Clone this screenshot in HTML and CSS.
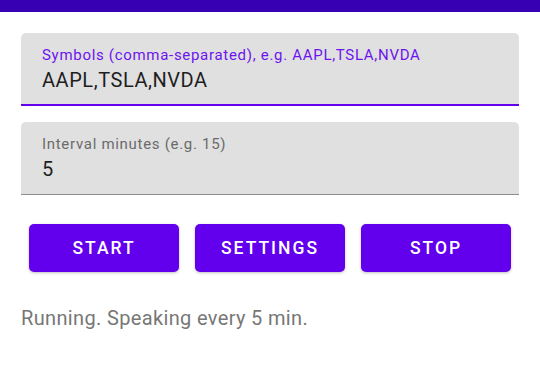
FILE: index.html
```html
<!DOCTYPE html>
<html>
<head>
<meta charset="utf-8">
<link rel="stylesheet" href="styles.css">
</head>
<body>
<div class="topbar"></div>
<main class="content">
  <div class="field field-focused">
    <div class="field-label">Symbols (comma-separated), e.g. AAPL,TSLA,NVDA</div>
    <div class="field-value">AAPL,TSLA,NVDA</div>
  </div>
  <div class="field">
    <div class="field-label">Interval minutes (e.g. 15)</div>
    <div class="field-value">5</div>
  </div>
  <div class="button-row">
    <button class="btn">START</button>
    <button class="btn">SETTINGS</button>
    <button class="btn">STOP</button>
  </div>
  <p class="status">Running. Speaking every 5 min.</p>
</main>
</body>
</html>
```

FILE: styles.css
```css
html, body {
  margin: 0;
  padding: 0;
  background: #ffffff;
  font-family: Roboto, "Liberation Sans", sans-serif;
}
.topbar {
  height: 12px;
  background: #3700b3;
}
.content {
  padding: 21px 21px 0 21px;
}
.field {
  background: #e0e0e0;
  border-radius: 5px 5px 0 0;
  padding: 13px 21px 13px 21px;
  border-bottom: 1px solid #8c8c8c;
  margin-bottom: 16px;
}
.field-focused {
  padding-bottom: 12px;
  border-bottom: 2px solid #6200ee;
}
.field-label {
  font-size: 15px;
  line-height: 18px;
  letter-spacing: 0.7px;
  color: #6b6b6b;
}
.field-focused .field-label {
  color: #6d14ee;
}
.field-value {
  margin-top: 4px;
  font-size: 20px;
  line-height: 24px;
  letter-spacing: 0.55px;
  color: #1e1e1e;
}
.button-row {
  display: flex;
  gap: 16px;
  padding: 0 8px;
  margin-top: 29px;
}
.btn {
  flex: 1;
  height: 48px;
  border: none;
  border-radius: 5px;
  background: #6200ee;
  color: #ffffff;
  font-family: Roboto, "Liberation Sans", sans-serif;
  font-weight: 500;
  font-size: 17.5px;
  letter-spacing: 2px;
  box-shadow: 0 1px 3px rgba(0,0,0,0.25);
  padding: 0;
}
.status {
  margin: 34px 0 0 0;
  font-size: 20px;
  line-height: normal;
  letter-spacing: 0.35px;
  color: #777777;
}
```
